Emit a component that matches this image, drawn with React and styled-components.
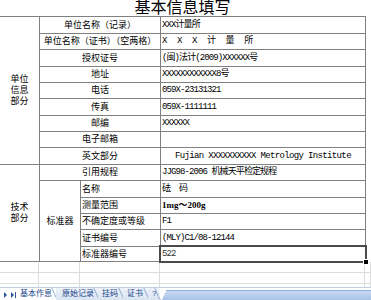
import styled, { createGlobalStyle } from "styled-components";

const GlobalStyle = createGlobalStyle`
  html, body {
    margin: 0;
    padding: 0;
    background: #ffffff;
  }
  body {
    font-family: "Liberation Sans", "Noto Sans CJK SC", sans-serif;
    color: #000;
  }
`;

const Page = styled.div`
  width: 371px;
  height: 300px;
  overflow: hidden;
  display: flex;
  flex-direction: column;
`;

const Title = styled.div`
  height: 16px;
  width: 365px;
  display: flex;
  align-items: center;
  justify-content: center;
  font-size: 16px;
  line-height: 16px;
`;

const Sheet = styled.div`
  width: 365px;
  display: grid;
  grid-template-columns: 39px 40px 79px 204px;
  grid-template-rows: 16px 15px 16px 15px 15px 16px 15px 15px 16px 15px 16px 15px 15px 16px 14px;
  gap: 1px;
  background: #808080;
  border-top: 1px solid #808080;
  border-bottom: 1px solid #808080;
  border-right: 1px solid #808080;
`;

const Cell = styled.div`
  grid-column: ${(p) => p.$c};
  grid-row: ${(p) => p.$r};
  background: #fff;
  display: flex;
  align-items: center;
  justify-content: ${(p) => (p.$align === "left" ? "flex-start" : "center")};
  padding-left: ${(p) => (p.$align === "left" ? "1px" : "0")};
  font-size: 9px;
  line-height: 11px;
  white-space: nowrap;
  position: relative;
`;

const GroupLabel = styled(Cell)`
  flex-direction: column;
  text-align: center;

  span {
    display: block;
    line-height: 11px;
  }
`;

const Value = styled(Cell)`
  font-family: "Liberation Mono", "Noto Sans CJK SC", monospace;
  letter-spacing: ${(p) => p.$spacing || "-0.9px"};
  padding-left: ${(p) => (p.$align === "center" ? "0" : "1px")};
  justify-content: ${(p) => (p.$align === "center" ? "center" : "flex-start")};
  white-space: pre;
`;

const BoldValue = styled(Value)`
  font-family: "Liberation Serif", "Noto Sans CJK SC", serif;
  font-weight: bold;
  letter-spacing: 0;
`;

const Selected = styled(Value)`
  outline: 2px solid #4a4a4a;
  outline-offset: 0px;
  z-index: 2;
  color: #333;
`;

const FillHandle = styled.span`
  position: absolute;
  right: -4px;
  bottom: -4px;
  width: 4px;
  height: 4px;
  background: #000;
  border: 1px solid #fff;
`;

const Blank = styled.div`
  display: grid;
  grid-template-columns: 39px 41px 80px 205px 6px;
  grid-template-rows: 11px 11px 3px;
`;

const BlankCell = styled.div`
  border-right: 1px solid #dadcdd;
  border-bottom: ${(p) => (p.$last ? "none" : "1px solid #dadcdd")};
`;

const TabBar = styled.div`
  height: 13px;
  display: flex;
  align-items: stretch;
  background: #ffffff;
  border-top: 1px solid #c2cfe0;
  font-size: 8px;
  color: #15428b;
`;

const Nav = styled.div`
  width: 19px;
  display: flex;
  align-items: center;
  justify-content: center;
`;

const Tab = styled.div`
  position: relative;
  padding: 0 ${(p) => p.$pr || "4px"} 0 ${(p) => p.$pl || "4px"};
  display: flex;
  align-items: center;
  line-height: 12px;
  background: ${(p) => (p.$active ? "#ffffff" : "linear-gradient(#eef3fa, #d9e4f2)")};
  border-bottom: 1px solid ${(p) => (p.$active ? "#ffffff" : "#8fa9cf")};
  white-space: nowrap;

  &::after {
    content: "";
    position: absolute;
    top: 0;
    bottom: 0;
    right: 1px;
    border-right: 1px solid #8fa9cf;
    transform: skewX(25deg);
  }
`;

const Scroll = styled.div`
  flex: 1;
  margin-left: 2px;
  margin-top: 2px;
  background: linear-gradient(#c9dbf2, #a3bfe5);
  border-top: 1px solid #8eadd8;
  clip-path: polygon(5px 0, 100% 0, 100% 100%, 0 100%);
`;

const rows = [
  { label: "单位名称（记录）", value: "XXX计量所" },
  { label: "单位名称（证书）（空两格）", value: "X X X 计 量 所", spacing: "2.1px" },
  { label: "授权证号", value: "(闽)法计(2009)XXXXXX号" },
  { label: "地址", value: "XXXXXXXXXXXX8号" },
  { label: "电话", value: "059X-23131321" },
  { label: "传真", value: "059X-1111111" },
  { label: "邮编", value: "XXXXXX" },
  { label: "电子邮箱", value: "" },
  { label: "英文部分", value: "Fujian XXXXXXXXXX Metrology Institute", align: "center", spacing: "-0.65px" },
  { label: "引用规程", value: "JJG98-2006 机械天平检定规程" },
];

const standards = [
  { label: "名称", value: "砝  码" },
  { label: "测量范围", value: "1mg～200g", bold: true },
  { label: "不确定度或等级", value: "F1" },
  { label: "证书编号", value: "(MLY)C1/08-12144" },
  { label: "标准器编号", value: "522", selected: true },
];

function NavArrows() {
  return (
    <svg width="16" height="8" viewBox="0 0 16 8">
      <path d="M2 1 L5 4 L2 7 Z" fill="#2f5597" />
      <path d="M9 1 L12 4 L9 7 Z" fill="#2f5597" />
      <rect x="13" y="1" width="1" height="6" fill="#2f5597" />
    </svg>
  );
}

export default function App() {
  return (
    <Page>
      <GlobalStyle />
      <Title>基本信息填写</Title>
      <Sheet>
        <GroupLabel $c="1" $r="1 / 10">
          <span>单位</span>
          <span>信息</span>
          <span>部分</span>
        </GroupLabel>
        <GroupLabel $c="1" $r="10 / 16">
          <span>技术</span>
          <span>部分</span>
        </GroupLabel>
        {rows.map((r, i) => (
          <Cell key={"l" + i} $c="2 / 4" $r={`${i + 1}`}>
            {r.label}
          </Cell>
        ))}
        {rows.map((r, i) => (
          <Value key={"v" + i} $c="4" $r={`${i + 1}`} $align={r.align} $spacing={r.spacing}>
            {r.value}
          </Value>
        ))}
        <Cell $c="2" $r="11 / 16">
          标准器
        </Cell>
        {standards.map((s, i) => (
          <Cell key={"sl" + i} $c="3" $r={`${i + 11}`} $align="left">
            {s.label}
          </Cell>
        ))}
        {standards.map((s, i) => {
          if (s.bold) {
            return (
              <BoldValue key={"sv" + i} $c="4" $r={`${i + 11}`}>
                {s.value}
              </BoldValue>
            );
          }
          if (s.selected) {
            return (
              <Selected key={"sv" + i} $c="4" $r={`${i + 11}`}>
                {s.value}
                <FillHandle />
              </Selected>
            );
          }
          return (
            <Value key={"sv" + i} $c="4" $r={`${i + 11}`}>
              {s.value}
            </Value>
          );
        })}
      </Sheet>
      <Blank>
        {Array.from({ length: 15 }).map((_, i) => (
          <BlankCell key={i} $last={i >= 10} />
        ))}
      </Blank>
      <TabBar>
        <Nav>
          <NavArrows />
        </Nav>
        <Tab $active $pl="1px" $pr="4px">基本作息</Tab>
        <Tab $pl="6px" $pr="4px">原始记录</Tab>
        <Tab $pl="4px" $pr="5px">挂码</Tab>
        <Tab $pl="4px" $pr="5px">证书</Tab>
        <Tab $pl="4px" $pr="3px">?</Tab>
        <Scroll />
      </TabBar>
    </Page>
  );
}
